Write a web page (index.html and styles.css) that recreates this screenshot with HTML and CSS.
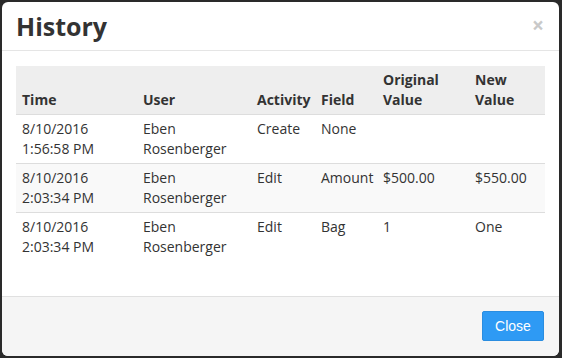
FILE: index.html
```html
<!DOCTYPE html>
<html>
  <head>
    <meta charset="UTF-8" />
    <title>History</title>
    <link rel="stylesheet" href="styles.css">
  </head>
  <body>
    <div class="modal">
      <div class="modal-header">
        <div class="modal-title">History</div>
        <button class="close">&times;</button>
      </div>
      <div class="modal-body">
        <table class="history">
          <colgroup>
            <col style="width: 121px" />
            <col style="width: 114px" />
            <col style="width: 64px" />
            <col style="width: 62px" />
            <col style="width: 92px" />
            <col style="width: 76px" />
          </colgroup>
          <thead>
            <tr>
              <th>Time</th>
              <th>User</th>
              <th>Activity</th>
              <th>Field</th>
              <th>Original Value</th>
              <th>New Value</th>
            </tr>
          </thead>
          <tbody>
            <tr>
              <td>8/10/2016 1:56:58 PM</td>
              <td>Eben Rosenberger</td>
              <td>Create</td>
              <td>None</td>
              <td></td>
              <td></td>
            </tr>
            <tr>
              <td>8/10/2016 2:03:34 PM</td>
              <td>Eben Rosenberger</td>
              <td>Edit</td>
              <td>Amount</td>
              <td>$500.00</td>
              <td>$550.00</td>
            </tr>
            <tr>
              <td>8/10/2016 2:03:34 PM</td>
              <td>Eben Rosenberger</td>
              <td>Edit</td>
              <td>Bag</td>
              <td>1</td>
              <td>One</td>
            </tr>
          </tbody>
        </table>
      </div>
      <div class="modal-footer">
        <button class="btn-close">Close</button>
      </div>
    </div>
  </body>
</html>
```

FILE: styles.css
```css
html,
body {
  margin: 0;
  padding: 0;
  width: 100%;
  height: 100%;
}
body {
  background: #2a2a2a;
  padding: 2px;
  box-sizing: border-box;
  font-family: "Open Sans", "DejaVu Sans", sans-serif;
  font-size: 14px;
  line-height: 20px;
  color: #333;
}
.modal {
  width: 557px;
  background: #fff;
  border-radius: 6px;
  overflow: hidden;
}
.modal-header {
  display: flex;
  justify-content: space-between;
  align-items: flex-start;
  padding: 6px 15px 6px 14px;
  border-bottom: 1px solid #e5e5e5;
}
.modal-title {
  font-size: 25px;
  line-height: 36px;
  font-weight: bold;
  color: #333;
}
.close {
  border: none;
  background: none;
  padding: 0;
  margin-top: 7px;
  font-family: "Open Sans", sans-serif;
  font-size: 21px;
  font-weight: bold;
  line-height: 20px;
  color: #c9c9c9;
  cursor: pointer;
}
.modal-body {
  padding: 15px 14px 15px 14px;
}
.history {
  width: 529px;
  table-layout: fixed;
  border-collapse: collapse;
  margin-bottom: 20px;
}
.history th,
.history td {
  padding: 4px 6px;
  text-align: left;
  vertical-align: top;
}
.history thead th {
  background: #eeeeee;
  font-weight: bold;
  vertical-align: bottom;
  border-bottom: 1px solid #dddddd;
}
.history tbody td {
  border-bottom: 1px solid #dddddd;
}
.history tbody tr:nth-child(2) {
  background: #f9f9f9;
}
.history tbody tr:last-child td {
  border-bottom: none;
}
.modal-footer {
  display: flex;
  justify-content: flex-end;
  padding: 14px 15px 15px;
  background: #f5f5f5;
  border-top: 1px solid #e0e0e0;
}
.btn-close {
  width: 62px;
  height: 30px;
  border: 1px solid #2a8de0;
  border-radius: 2px;
  background: #2e9af4;
  color: #fff;
  font-family: "Liberation Sans", Arial, sans-serif;
  font-size: 14px;
  cursor: pointer;
}
```
